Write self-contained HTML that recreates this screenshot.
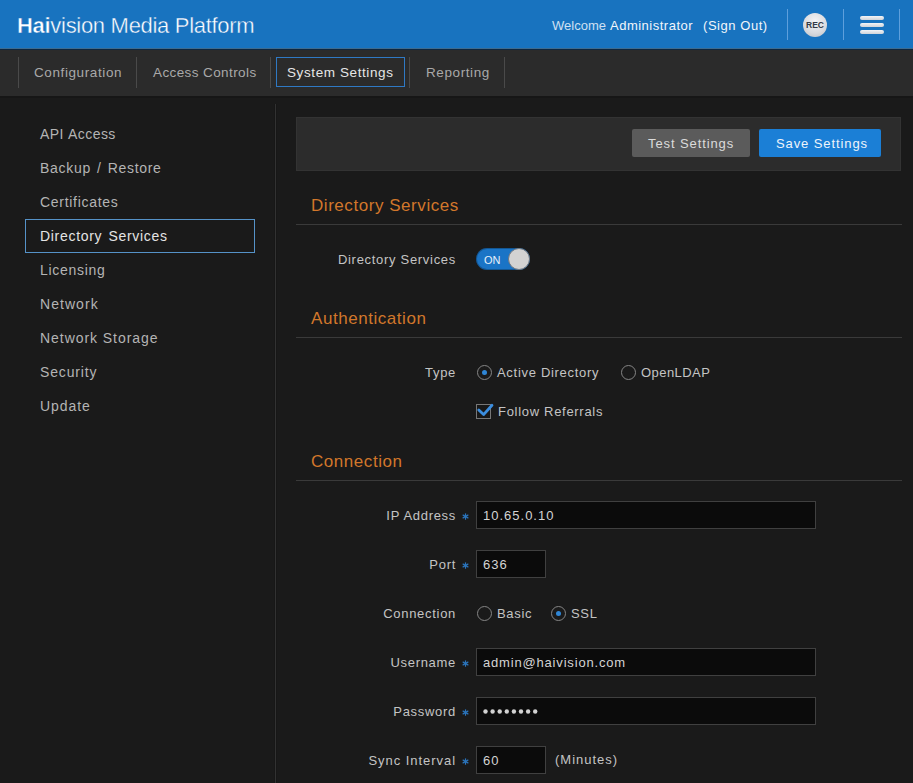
<!DOCTYPE html>
<html><head><meta charset="utf-8">
<style>
*{margin:0;padding:0;box-sizing:border-box}
html,body{width:913px;height:783px;overflow:hidden;background:#1a1a1a;font-family:"Liberation Sans",sans-serif}
.a{position:absolute;white-space:pre}
#hdr{position:absolute;left:0;top:0;width:913px;height:48px;background:#1873bf}
#hdrline{position:absolute;left:0;top:48px;width:913px;height:2px;background:linear-gradient(#3d6b8f 0,#3d6b8f 1px,#0d2740 1px,#0d2740 2px)}
#nav{position:absolute;left:0;top:50px;width:913px;height:46px;background:#2b2b2b}
#navline{position:absolute;left:0;top:96px;width:913px;height:2px;background:#161616}
.sep{position:absolute;width:1px;background:#4a4a4a}
.hsep{position:absolute;width:1px;background:#5e9fdc}
.title{left:17px;top:15px;font-size:22px;line-height:22px;color:#fff;letter-spacing:-0.3px}
.title b{font-weight:700}
.welcome{font-size:13px;line-height:13px;top:19px;color:#cfe0f2;letter-spacing:0.3px}
.rec{position:absolute;left:803px;top:13px;width:24px;height:24px;border-radius:50%;background:radial-gradient(circle at 50% 35%,#f4f4f6 0%,#d8dade 60%,#b9bcc2 100%);font-size:8.5px;font-weight:700;color:#333a46;text-align:center;line-height:25px;letter-spacing:0px}
.bar{position:absolute;left:860px;width:24px;height:4px;border-radius:2px;background:linear-gradient(#f2f4f7,#cfd3d9)}
.tab{font-size:13.5px;line-height:14px;top:65.5px;color:#a9a9a9;letter-spacing:0.6px}
.tabact{position:absolute;left:276px;top:57px;width:129px;height:30px;border:1px solid #2f79c4}
.side{font-size:14px;line-height:14px;left:40px;color:#b4b4b4;letter-spacing:0.7px;word-spacing:1.5px}
.sideact{position:absolute;left:25px;top:219px;width:230px;height:34px;border:1px solid #5592c8}
#vline{position:absolute;left:275px;top:104px;width:1px;height:679px;background:#323232;box-shadow:-1px 0 0 #171717,1px 0 0 #171717}
#panel{position:absolute;left:296px;top:117px;width:605px;height:54px;background:#2c2c2c;border:1px solid #333}
.btn{position:absolute;top:129px;height:28px;border-radius:2px}
.btxt{font-size:13px;line-height:13px;color:#dcdcdc;letter-spacing:0.9px}
.h2{font-size:17px;line-height:17px;left:311px;color:#d2772b;letter-spacing:0.55px}
.rule{position:absolute;left:296px;width:606px;height:1px;background:#3a3a3a}
.lbl{font-size:13px;line-height:13px;color:#c4c4c4;letter-spacing:0.7px}
.astr{position:absolute;left:462px}
.rl{left:0;width:456px;text-align:right}
.inp{position:absolute;left:476px;height:28px;background:#0b0b0b;border:1px solid #404040}
.itxt{font-size:13px;line-height:13px;color:#d4d4d4;letter-spacing:0.6px}
.radio{position:absolute;width:15px;height:15px;border-radius:50%;border:1.5px solid #858585}
.radio.on::after{content:"";position:absolute;left:3.5px;top:3.5px;width:5px;height:5px;border-radius:50%;background:#2f86d6}
</style></head><body>
<div id="hdr"></div>
<div id="hdrline"></div>
<div class="a title"><b style="-webkit-text-stroke:0.5px #1873bf">Hai</b><span style="-webkit-text-stroke:0.4px #1873bf">vision Media Platform</span></div>
<div class="a welcome" style="left:552px;letter-spacing:0px">Welcome</div><div class="a welcome" style="left:610px;color:#f2f6fb;letter-spacing:0.5px">Administrator</div><div class="a welcome" style="left:703px;color:#f2f6fb;letter-spacing:0.55px">(Sign Out)</div>
<div class="hsep" style="left:787px;top:9px;height:31px"></div>
<div class="rec">REC</div>
<div class="hsep" style="left:843px;top:9px;height:31px"></div>
<div class="bar" style="top:16px"></div>
<div class="bar" style="top:23px"></div>
<div class="bar" style="top:30px"></div>
<div class="hsep" style="left:899px;top:9px;height:31px"></div>

<div id="nav"></div>
<div id="navline"></div>
<div class="sep" style="left:18px;top:57px;height:31px"></div>
<div class="sep" style="left:136px;top:57px;height:31px"></div>
<div class="sep" style="left:270px;top:57px;height:31px"></div>
<div class="sep" style="left:409px;top:57px;height:31px"></div>
<div class="sep" style="left:504px;top:57px;height:31px"></div>
<div class="a tab" style="left:34px">Configuration</div>
<div class="a tab" style="left:153px;letter-spacing:0.4px">Access Controls</div>
<div class="tabact"></div>
<div class="a tab" style="left:287px;color:#e6e6e6">System Settings</div>
<div class="a tab" style="left:426px">Reporting</div>

<div id="vline"></div>
<div class="sideact"></div>
<div class="a side" style="top:127px;letter-spacing:0.45px;word-spacing:0.5px">API Access</div>
<div class="a side" style="top:161px">Backup / Restore</div>
<div class="a side" style="top:195px">Certificates</div>
<div class="a side" style="top:229px;color:#e4e4e4">Directory Services</div>
<div class="a side" style="top:263px">Licensing</div>
<div class="a side" style="top:297px;letter-spacing:1.05px">Network</div>
<div class="a side" style="top:331px;letter-spacing:0.95px;word-spacing:0">Network Storage</div>
<div class="a side" style="top:365px;letter-spacing:0.85px">Security</div>
<div class="a side" style="top:399px;letter-spacing:0.95px">Update</div>

<div id="panel"></div>
<div class="btn" style="left:632px;width:118px;background:#5b5b5b"></div>
<div class="a btxt" style="left:648px;top:137px">Test Settings</div>
<div class="btn" style="left:759px;width:122px;background:#1b7fd6"></div>
<div class="a btxt" style="left:776px;top:137px;color:#eef4fb">Save Settings</div>

<div class="a h2" style="top:197px">Directory Services</div>
<div class="rule" style="top:224px"></div>
<div class="a lbl rl" style="top:253px">Directory Services</div>
<div style="position:absolute;left:476px;top:248px;width:54px;height:22px;border-radius:11px;background:#1a74c6;box-shadow:inset 0 0 0 1px rgba(0,0,0,0.25)"></div>
<div class="a" style="left:484px;top:255px;font-size:11px;line-height:11px;color:#e8f0fa">ON</div>
<div style="position:absolute;left:508px;top:248px;width:22px;height:22px;border-radius:50%;background:#d2d2d2;border:1px solid #6f7780"></div>

<div class="a h2" style="top:310px">Authentication</div>
<div class="rule" style="top:337px"></div>
<div class="a lbl rl" style="top:366px">Type</div>
<div class="radio on" style="left:477px;top:365px"></div>
<div class="a lbl" style="left:497px;top:366px">Active Directory</div>
<div class="radio" style="left:621px;top:365px"></div>
<div class="a lbl" style="left:641px;top:366px;letter-spacing:0.45px">OpenLDAP</div>
<div style="position:absolute;left:476px;top:404px;width:15px;height:15px;border:1px solid #777;background:#181818"></div>
<svg style="position:absolute;left:476px;top:400px" width="18" height="20" viewBox="0 0 18 20"><path d="M2.8 10 L7.6 14.6 L16 5.3" fill="none" stroke="#3b8ee0" stroke-width="2.8" stroke-linecap="round" stroke-linejoin="round"/></svg>
<div class="a lbl" style="left:498px;top:405px">Follow Referrals</div>

<div class="a h2" style="top:453px">Connection</div>
<div class="rule" style="top:480px"></div>

<div class="a lbl rl" style="top:509px">IP Address</div>
<svg class="astr" style="top:513px" width="7" height="7" viewBox="0 0 7 7"><g stroke="#2b74bb" stroke-width="1.25" stroke-linecap="round"><line x1="3.5" y1="0.8" x2="3.5" y2="6.2"/><line x1="1.1" y1="2.15" x2="5.9" y2="4.85"/><line x1="1.1" y1="4.85" x2="5.9" y2="2.15"/></g></svg>
<div class="inp" style="top:501px;width:340px"></div>
<div class="a itxt" style="left:483px;top:509px;letter-spacing:1px">10.65.0.10</div>
<div class="a lbl rl" style="top:558px">Port</div>
<svg class="astr" style="top:562px" width="7" height="7" viewBox="0 0 7 7"><g stroke="#2b74bb" stroke-width="1.25" stroke-linecap="round"><line x1="3.5" y1="0.8" x2="3.5" y2="6.2"/><line x1="1.1" y1="2.15" x2="5.9" y2="4.85"/><line x1="1.1" y1="4.85" x2="5.9" y2="2.15"/></g></svg>
<div class="inp" style="top:550px;width:70px"></div>
<div class="a itxt" style="left:483px;top:558px;letter-spacing:1px">636</div>
<div class="a lbl rl" style="top:607px">Connection</div>
<div class="radio" style="left:477px;top:606px"></div>
<div class="a lbl" style="left:497px;top:607px">Basic</div>
<div class="radio on" style="left:551px;top:606px"></div>
<div class="a lbl" style="left:571px;top:607px">SSL</div>
<div class="a lbl rl" style="top:656px">Username</div>
<svg class="astr" style="top:660px" width="7" height="7" viewBox="0 0 7 7"><g stroke="#2b74bb" stroke-width="1.25" stroke-linecap="round"><line x1="3.5" y1="0.8" x2="3.5" y2="6.2"/><line x1="1.1" y1="2.15" x2="5.9" y2="4.85"/><line x1="1.1" y1="4.85" x2="5.9" y2="2.15"/></g></svg>
<div class="inp" style="top:648px;width:340px"></div>
<div class="a itxt" style="left:483px;top:656px;letter-spacing:0.82px">admin@haivision.com</div>
<div class="a lbl rl" style="top:705px">Password</div>
<svg class="astr" style="top:709px" width="7" height="7" viewBox="0 0 7 7"><g stroke="#2b74bb" stroke-width="1.25" stroke-linecap="round"><line x1="3.5" y1="0.8" x2="3.5" y2="6.2"/><line x1="1.1" y1="2.15" x2="5.9" y2="4.85"/><line x1="1.1" y1="4.85" x2="5.9" y2="2.15"/></g></svg>
<div class="inp" style="top:697px;width:340px"></div>
<svg style="position:absolute;left:483px;top:709px" width="60" height="6" viewBox="0 0 60 6"><g fill="#d2d2d2"><circle cx="2.5" cy="2.5" r="2.2"/><circle cx="9.6" cy="2.5" r="2.2"/><circle cx="16.7" cy="2.5" r="2.2"/><circle cx="23.8" cy="2.5" r="2.2"/><circle cx="30.9" cy="2.5" r="2.2"/><circle cx="38.0" cy="2.5" r="2.2"/><circle cx="45.1" cy="2.5" r="2.2"/><circle cx="52.2" cy="2.5" r="2.2"/></g></svg>
<div class="a lbl rl" style="top:754px;letter-spacing:0.95px">Sync Interval</div>
<svg class="astr" style="top:758px" width="7" height="7" viewBox="0 0 7 7"><g stroke="#2b74bb" stroke-width="1.25" stroke-linecap="round"><line x1="3.5" y1="0.8" x2="3.5" y2="6.2"/><line x1="1.1" y1="2.15" x2="5.9" y2="4.85"/><line x1="1.1" y1="4.85" x2="5.9" y2="2.15"/></g></svg>
<div class="inp" style="top:746px;width:70px"></div>
<div class="a itxt" style="left:483px;top:754px;letter-spacing:1px">60</div>
<div class="a lbl" style="left:555px;top:753px;letter-spacing:1px">(Minutes)</div>
</body></html>
